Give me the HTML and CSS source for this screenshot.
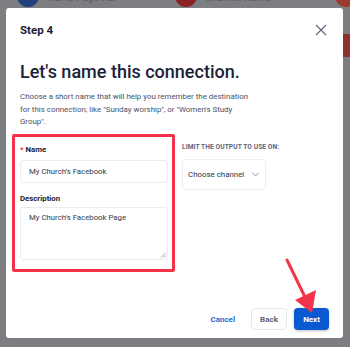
FILE: index.html
```html
<!DOCTYPE html>
<html>
<head>
<meta charset="utf-8">
<link rel="stylesheet" href="styles.css">
</head>
<body>
<div class="page">
  <div class="bg-row">
    <span class="bg-dot blue"></span><span class="bg-text">Name Page Name</span>
    <span class="bg-dot red"></span><span class="bg-text">Channel Name Here</span>
    <span class="bg-dot red edge"></span>
  </div>
  <div class="bg-side"></div>
</div>

<div class="modal">
  <div class="modal-header">
    <span class="step">Step 4</span>
    <svg class="close" width="12" height="12" viewBox="0 0 12 12"><path d="M1 1L11 11M11 1L1 11" stroke="#5b6275" stroke-width="1.1" fill="none"/></svg>
  </div>
  <div class="modal-body">
    <h1 class="title">Let's name this connection.</h1>
    <p class="intro">Choose a short name that will help you remember the destination for this connection, like "Sunday worship", or "Women's Study Group".</p>
    <div class="form-row">
      <div class="fields">
        <label class="label"><span class="req">*</span> Name</label>
        <div class="input">My Church's Facebook</div>
        <label class="label desc">Description</label>
        <div class="textarea">My Church's Facebook Page
          <svg class="grip" width="6" height="6" viewBox="0 0 6 6"><path d="M5.5 1L1 5.5M5.5 3.5L3.5 5.5" stroke="#8a8f99" stroke-width="0.8"/></svg>
        </div>
      </div>
      <div class="limit">
        <div class="limit-label">LIMIT THE OUTPUT TO USE ON:</div>
        <div class="select"><span>Choose channel</span>
          <svg width="7" height="5" viewBox="0 0 7 5"><path d="M0.4 0.8L3.5 3.9L6.6 0.8" stroke="#6b7282" stroke-width="0.8" fill="none"/></svg>
        </div>
      </div>
    </div>
  </div>
  <div class="modal-footer">
    <span class="cancel">Cancel</span>
    <span class="btn back">Back</span>
    <span class="btn next">Next</span>
  </div>
  <svg class="arrow" width="42" height="66" viewBox="0 0 42 66"><path d="M8 10L25 45" stroke="#f4334b" stroke-width="3" stroke-linecap="round"/><path d="M16 50L37 40L33 63Z" fill="#f4334b"/></svg>
</div>
</body>
</html>
```
FILE: styles.css
```css
* { box-sizing: border-box; }
html, body { margin: 0; padding: 0; }
body {
  width: 350px;
  height: 347px;
  overflow: hidden;
  background: #7d7e82;
  font-family: Roboto, "Liberation Sans", sans-serif;
  position: relative;
}
.page { height: 100%; }
.bg-row {
  display: flex;
  align-items: center;
  height: 0;
  padding-left: 17px;
}
.bg-dot {
  width: 22px;
  height: 22px;
  border-radius: 50%;
  margin-top: -8px;
  flex: none;
}
.bg-dot.blue { background: #1f3f7c; }
.bg-dot.red { background: #8c2323; margin-left: 58px; }
.bg-dot.edge { margin-left: 60px; background: #9a3b30; }
.bg-text {
  color: #5c5d61;
  font-size: 10px;
  margin-left: 8px;
  margin-top: -6px;
  width: 70px;
  white-space: nowrap;
  overflow: hidden;
  flex: none;
}
.bg-side {
  position: absolute;
  right: 0;
  top: 34px;
  width: 7px;
  height: 23px;
  background: #8d3030;
}

.modal {
  position: absolute;
  left: 6px;
  top: 8px;
  width: 337px;
  height: 330px;
  background: #fff;
  border-radius: 3px;
  display: flex;
  flex-direction: column;
}
.modal-header {
  display: flex;
  justify-content: space-between;
  align-items: center;
  padding: 0 16px 0 14px;
  height: 44px;
  flex: none;
}
.step {
  font-size: 11.5px;
  font-weight: 700;
  color: #1c2233;
}
.modal-body {
  padding: 0 14px 0 6px;
}
.title {
  margin: 8px 0 0 8px;
  font-size: 18px;
  font-weight: 500;
  color: #1b2238;
  line-height: 24px;
}
.intro {
  margin: 7px 0 0 8px;
  width: 236px;
  font-size: 7.9px;
  line-height: 12.5px;
  color: #4a5164;
}
.form-row {
  display: flex;
  gap: 7px;
  margin-top: 5.5px;
}
.fields {
  width: 163px;
  border: 3px solid #f4334b;
  border-radius: 2px;
  padding: 6.5px 4px 9px 5px;
  display: flex;
  flex-direction: column;
}
.label {
  font-size: 7.8px;
  font-weight: 700;
  color: #1c2233;
  line-height: 11px;
}
.req { color: #e5334b; }
.label.desc { margin-top: 9.5px; }
.input, .textarea {
  border: 1px solid #eaecf0;
  border-radius: 3px;
  font-size: 7.8px;
  color: #333a4b;
  padding: 0 8px;
}
.input {
  margin-top: 5.5px;
  height: 23px;
  line-height: 21px;
}
.textarea {
  margin-top: 3.5px;
  height: 53px;
  padding-top: 3.5px;
  line-height: 11px;
  position: relative;
}
.grip { position: absolute; right: 1px; bottom: 1px; }
.limit {
  padding-top: 9px;
}
.limit-label {
  font-size: 6.6px;
  font-weight: 700;
  color: #5b6479;
  letter-spacing: 0.1px;
  line-height: 8px;
}
.select {
  margin-top: 8px;
  width: 84px;
  height: 31px;
  border: 1px solid #eceef2;
  border-radius: 3px;
  display: flex;
  align-items: center;
  justify-content: space-between;
  padding: 0 6px 0 5px;
  font-size: 7.9px;
  color: #2c3344;
  white-space: nowrap;
}
.modal-footer {
  margin-top: auto;
  display: flex;
  justify-content: flex-end;
  align-items: center;
  gap: 7px;
  padding: 0 14px 8px 0;
}
.cancel {
  color: #2c6ad4;
  font-size: 8px;
  font-weight: 700;
  margin-right: 9px;
}
.btn {
  height: 22px;
  border-radius: 4px;
  font-size: 8px;
  font-weight: 700;
  display: flex;
  align-items: center;
  justify-content: center;
}
.back {
  width: 36px;
  border: 1px solid #e6e8ec;
  color: #5b6272;
}
.next {
  width: 35px;
  background: #0b59d1;
  color: #fff;
  box-shadow: 0 1px 3px rgba(0,0,0,0.25);
}
.arrow {
  position: absolute;
  left: 273px;
  top: 242px;
}
```
